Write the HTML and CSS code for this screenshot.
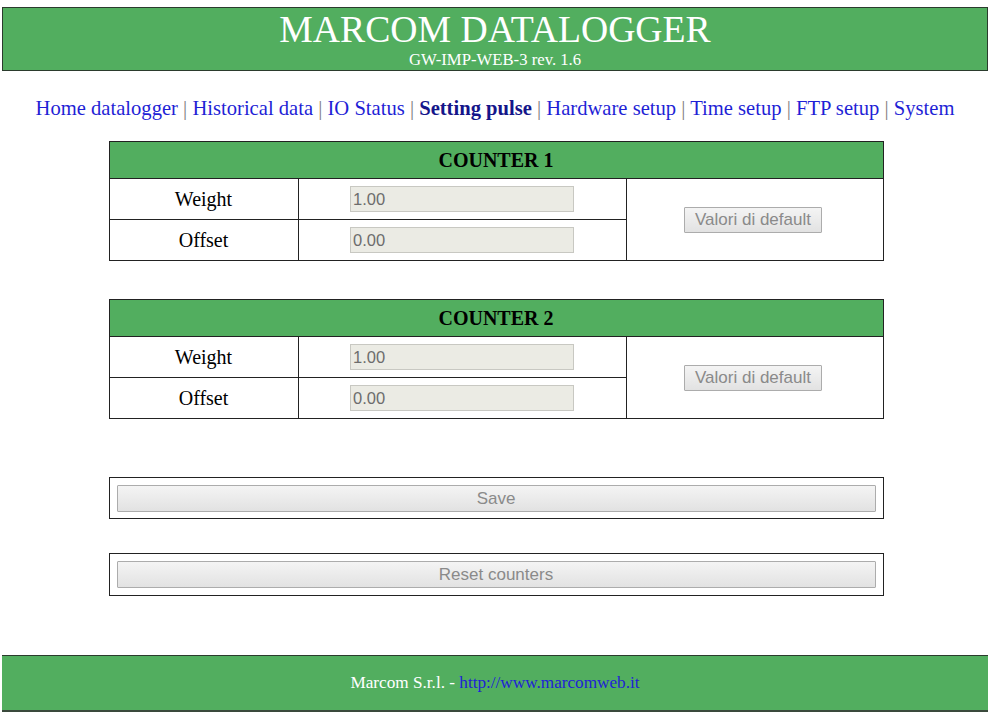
FILE: index.html
```html
<!DOCTYPE html>
<html>
<head>
<meta charset="utf-8">
<title>MARCOM DATALOGGER</title>
<link rel="stylesheet" href="styles.css">
</head>
<body>
<div class="header">
  <div class="title">MARCOM DATALOGGER</div>
  <div class="subtitle">GW-IMP-WEB-3 rev. 1.6</div>
</div>

<nav class="nav">
  <a href="#">Home datalogger</a> <span class="sep">|</span>
  <a href="#">Historical data</a> <span class="sep">|</span>
  <a href="#">IO Status</a> <span class="sep">|</span>
  <a href="#" class="active">Setting pulse</a> <span class="sep">|</span>
  <a href="#">Hardware setup</a> <span class="sep">|</span>
  <a href="#">Time setup</a> <span class="sep">|</span>
  <a href="#">FTP setup</a> <span class="sep">|</span>
  <a href="#">System</a>
</nav>

<div class="content">
<table class="counter first">
  <tr><th colspan="3" class="thead">COUNTER 1</th></tr>
  <tr>
    <td class="label">Weight</td>
    <td class="field"><input class="inp" type="text" value="1.00" disabled></td>
    <td class="action" rowspan="2"><button class="btn" disabled>Valori di default</button></td>
  </tr>
  <tr>
    <td class="label">Offset</td>
    <td class="field"><input class="inp" type="text" value="0.00" disabled></td>
  </tr>
</table>

<table class="counter second">
  <tr><th colspan="3" class="thead">COUNTER 2</th></tr>
  <tr>
    <td class="label">Weight</td>
    <td class="field"><input class="inp" type="text" value="1.00" disabled></td>
    <td class="action" rowspan="2"><button class="btn" disabled>Valori di default</button></td>
  </tr>
  <tr>
    <td class="label">Offset</td>
    <td class="field"><input class="inp" type="text" value="0.00" disabled></td>
  </tr>
</table>

<div class="box save-box"><button class="wide" disabled>Save</button></div>
<div class="box reset-box"><button class="wide" disabled>Reset counters</button></div>
</div>

<div class="footer">
  <span>Marcom S.r.l. - <a href="#" class="flink">http://www.marcomweb.it</a></span>
</div>
</body>
</html>
```

FILE: styles.css
```css
html, body {
  margin: 0;
  padding: 0;
  background: #ffffff;
}
body {
  padding: 7px 5px 8px 2px;
  font-family: "Liberation Serif", "Times New Roman", serif;
  color: #000;
}
.header {
  box-sizing: border-box;
  height: 64px;
  background: #52ae5f;
  border: 1px solid #2b3b2d;
  text-align: center;
  color: #ffffff;
  padding-top: 1px;
}
.title {
  font-size: 37.7px;
  line-height: 40px;
}
.subtitle {
  font-size: 16.7px;
  line-height: 18px;
  margin-top: 2px;
}
.nav {
  margin-top: 25px;
  text-align: center;
  font-size: 20.6px;
  line-height: 24px;
  white-space: nowrap;
}
.nav a {
  color: #1f1fd6;
  text-decoration: none;
}
.nav a.active {
  font-weight: bold;
  color: #15158a;
}
.sep {
  color: #808080;
}
.content {
  padding-left: 2px;
}
.counter {
  width: 775px;
  margin: 21px auto 0 auto;
  border-collapse: collapse;
  border: 1px solid #222;
  font-size: 20px;
}
.counter.second {
  margin-top: 38px;
}
.counter td, .counter th {
  border: 1px solid #222;
  padding: 0;
}
.thead {
  background: #52ae5f;
  height: 36px;
  font-weight: bold;
  text-align: center;
  font-size: 20px;
}
.label {
  width: 188px;
  height: 40px;
  text-align: center;
  line-height: 36px;
}
.field {
  width: 327px;
  text-align: center;
}
.action {
  text-align: center;
}
.inp {
  box-sizing: border-box;
  width: 224px;
  height: 26px;
  margin: 0;
  padding: 0 2px;
  background: #ebebe4;
  border: 1px solid #c8c8c2;
  color: #6d6d6d;
  font-family: "Liberation Sans", Arial, sans-serif;
  font-size: 16.5px;
  vertical-align: middle;
}
.btn {
  box-sizing: border-box;
  height: 26px;
  padding: 0 10px;
  margin-left: -3px;
  background: linear-gradient(#f4f4f4, #e2e2e2);
  border: 1px solid #acacac;
  border-radius: 1px;
  color: #8a8a8a;
  font-family: "Liberation Sans", Arial, sans-serif;
  font-size: 17px;
}
.box {
  box-sizing: border-box;
  width: 775px;
  height: 42px;
  margin: 58px auto 0 auto;
  border: 1px solid #222;
  padding: 7px;
}
.reset-box {
  margin-top: 34px;
  height: 43px;
}
.wide {
  display: block;
  box-sizing: border-box;
  width: 100%;
  height: 27px;
  margin: 0;
  background: linear-gradient(#f4f4f4, #e2e2e2);
  border: 1px solid #acacac;
  border-radius: 1px;
  color: #8a8a8a;
  font-family: "Liberation Sans", Arial, sans-serif;
  font-size: 17px;
}
.footer {
  box-sizing: border-box;
  height: 57px;
  margin-top: 59px;
  background: #52ae5f;
  border-top: 1px solid #2b3b2d;
  border-bottom: 2px solid #3a4a3c;
  display: flex;
  align-items: center;
  justify-content: center;
  color: #ffffff;
  font-size: 17.2px;
}
.flink {
  color: #1f1fd6;
  text-decoration: none;
}
```
